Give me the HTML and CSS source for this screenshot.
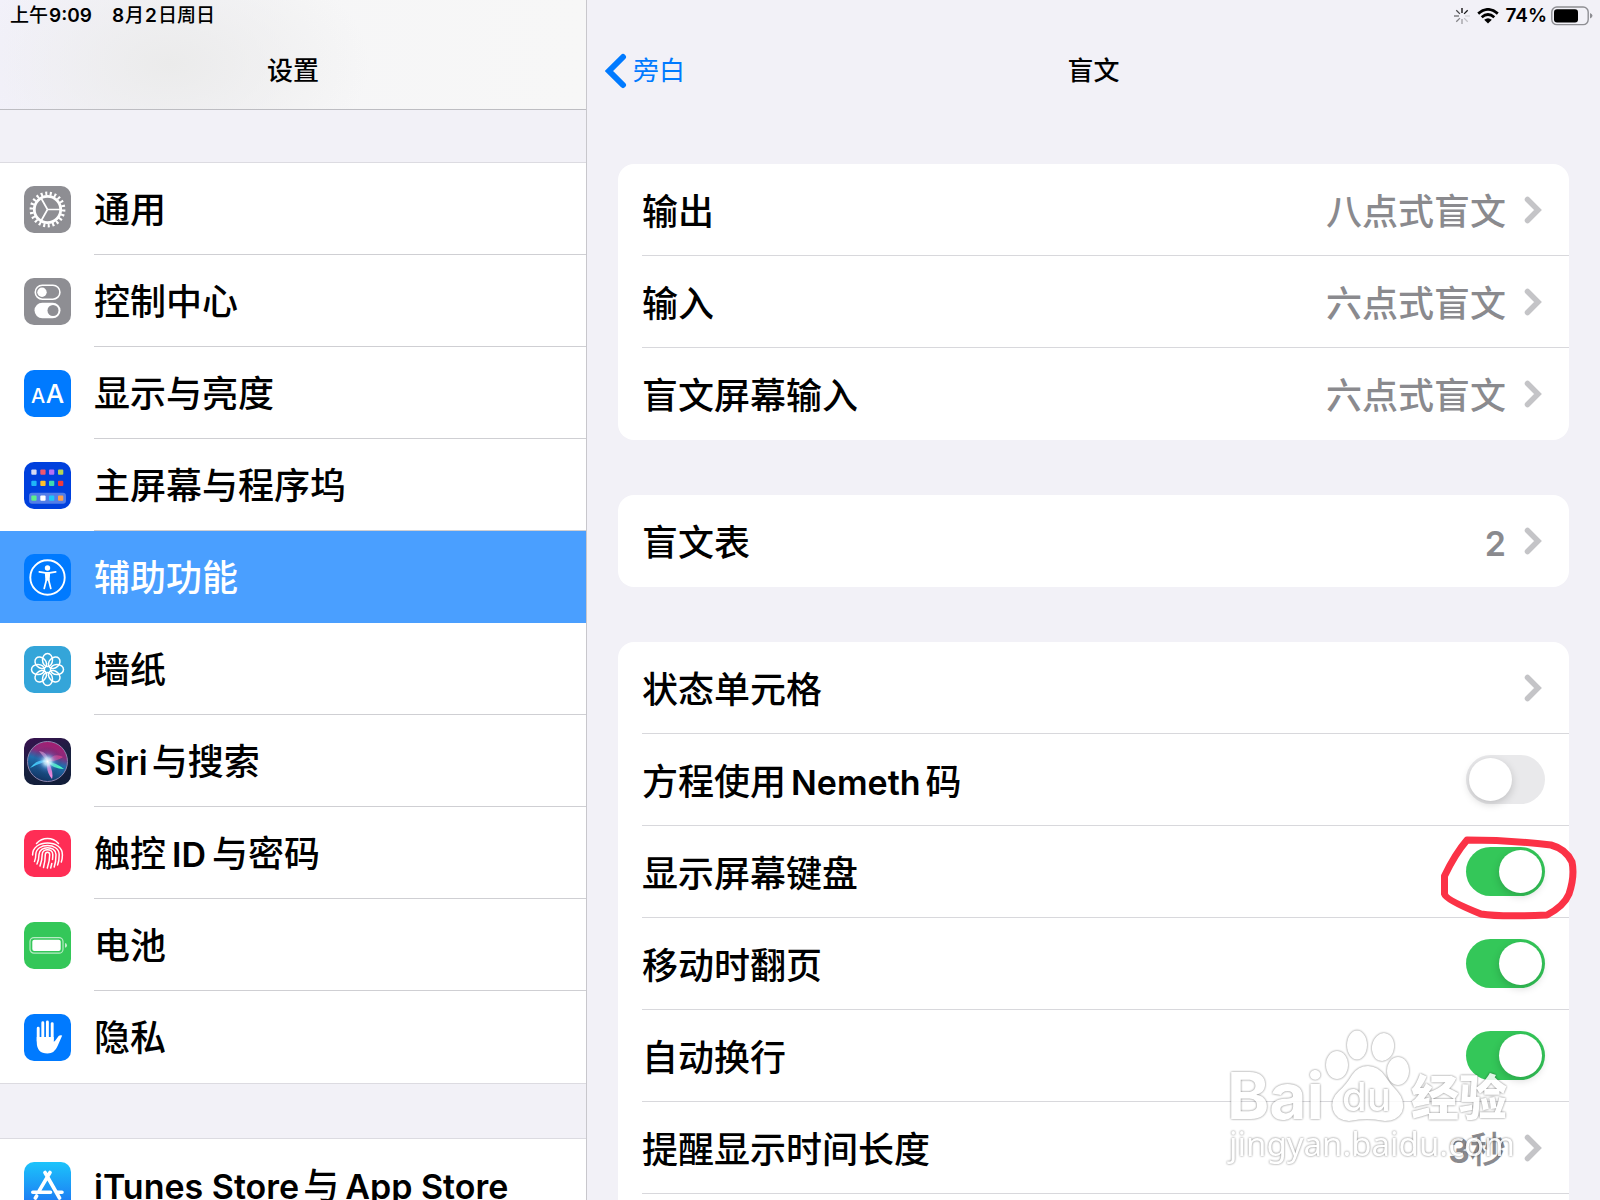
FILE: index.html
```html
<!DOCTYPE html>
<html lang="zh-CN">
<head>
<meta charset="utf-8">
<meta name="viewport" content="width=device-width, initial-scale=1">
<title>设置</title>
<link rel="stylesheet" href="styles.css">
</head>
<body>
<svg class="defs" aria-hidden="true">
  <defs>
    <symbol id="chevron" viewBox="0 0 18 28"><path d="M3.500 3.500L14 14L3.500 24.500" fill="none" stroke="currentColor" stroke-width="5.500" stroke-linecap="round" stroke-linejoin="miter"/></symbol>
  </defs>
</svg>
<div class="app">
  <aside class="sidebar">
    <header class="sidebar-head">
      <div class="status"><time>上午<span class="latin">9:09</span></time><time><span class="latin">8</span>月<span class="latin">2</span>日周日</time></div>
      <h1 class="title">设置</h1>
    </header>
    <nav class="menu">
      <ul class="menu-group">
        <li><a class="menu-item" href="#general">
          <svg class="icon gray" viewBox="0 0 47 47"><g fill="none" stroke="#fff"><circle cx="23.500" cy="23.500" r="13.200" stroke-width="2.800"/><circle cx="23.500" cy="23.500" r="16" stroke-width="3.800" pathLength="22" stroke-dasharray=".45 .55"/><path d="M23.500 23.500H37M23.500 23.500L17 12M23.500 23.500L17 35" stroke-width="1.700"/></g></svg>
          <span class="menu-label">通用</span></a></li>
        <li><a class="menu-item" href="#control">
          <svg class="icon gray" viewBox="0 0 47 47"><rect x="11.300" y="7.200" width="24.600" height="14" rx="7" fill="none" stroke="#fff" stroke-width="1.600"/><circle cx="18" cy="14.200" r="4.700" fill="#fff"/><rect x="10.500" y="24.700" width="26" height="15.600" rx="7.800" fill="#fff"/><circle cx="29" cy="32.500" r="5.500" fill="#8e8e93"/></svg>
          <span class="menu-label">控制中心</span></a></li>
        <li><a class="menu-item" href="#display">
          <svg class="icon blue" viewBox="0 0 47 47"><g fill="#fff" font-family="Inter, sans-serif" font-weight="500" text-anchor="middle"><text x="14" y="33.300" font-size="20">A</text><text x="31" y="33.300" font-size="26">A</text></g></svg>
          <span class="menu-label">显示与亮度</span></a></li>
        <li><a class="menu-item" href="#home">
          <svg class="icon navy" viewBox="0 0 47 47"><rect x="5" y="30.700" width="37" height="11" rx="3" fill="#fff" opacity=".32"/><rect x="7.300" y="7.400" width="5.300" height="5.300" rx="1" fill="#d5daf2"/><rect x="16.300" y="7.400" width="5.300" height="5.300" rx="1" fill="#f0566e"/><rect x="25" y="7.400" width="5.300" height="5.300" rx="1" fill="#b570f5"/><rect x="34" y="7.400" width="5.300" height="5.300" rx="1" fill="#b4d455"/><rect x="7.300" y="18.700" width="5.300" height="5.300" rx="1" fill="#1fb4f7"/><rect x="16.300" y="18.700" width="5.300" height="5.300" rx="1" fill="#ffbf2b"/><rect x="25" y="18.700" width="5.300" height="5.300" rx="1" fill="#3ddbb0"/><rect x="34" y="18.700" width="5.300" height="5.300" rx="1" fill="#f03a3a"/><rect x="7.300" y="33.400" width="5.300" height="5.300" rx="1" fill="#5df08a"/><rect x="16.300" y="33.400" width="5.300" height="5.300" rx="1" fill="#fff"/><rect x="25" y="33.400" width="5.300" height="5.300" rx="1" fill="#1cc8fa"/><rect x="34" y="33.400" width="5.300" height="5.300" rx="1" fill="#ff9f4a"/></svg>
          <span class="menu-label">主屏幕与程序坞</span></a></li>
        <li><a class="menu-item selected" href="#accessibility" aria-current="page">
          <svg class="icon blue" viewBox="0 0 47 47"><circle cx="23.500" cy="23.500" r="17.200" fill="none" stroke="#fff" stroke-width="1.900"/><circle cx="23.500" cy="14" r="2.700" fill="#fff"/><path d="M15.300 17.800L21.500 18.800H25.500L31.700 17.800M20.200 34.500L22.500 25.500H24.500L26.800 34.500" fill="none" stroke="#fff" stroke-width="1.700" stroke-linecap="round" stroke-linejoin="round"/><path d="M20.800 18.200H26.200L25.600 26.500H21.400Z" fill="#fff"/></svg>
          <span class="menu-label">辅助功能</span></a></li>
        <li><a class="menu-item" href="#wallpaper">
          <svg class="icon sky" viewBox="0 0 47 47"><g fill="none" stroke="#fff" stroke-width="1.500"><g id="petals"><ellipse cx="23.500" cy="14" rx="5" ry="6.500"/><ellipse cx="23.500" cy="33" rx="5" ry="6.500"/><ellipse cx="14" cy="23.500" rx="6.500" ry="5"/><ellipse cx="33" cy="23.500" rx="6.500" ry="5"/></g><use href="#petals" transform="rotate(45 23.500 23.500)"/></g></svg>
          <span class="menu-label">墙纸</span></a></li>
        <li><a class="menu-item" href="#siri">
          <svg class="icon siri" viewBox="0 0 47 47"><defs><radialGradient id="orb" cx=".5" cy=".5" r=".5"><stop offset="0" stop-color="#fff"/><stop offset=".25" stop-color="#c9ecff" stop-opacity=".8"/><stop offset=".55" stop-color="#5a8bd8" stop-opacity=".25"/><stop offset="1" stop-color="#0a1030" stop-opacity="0"/></radialGradient><linearGradient id="orbBase" x1=".65" y1="0" x2=".35" y2="1"><stop offset="0" stop-color="#a81c70"/><stop offset=".3" stop-color="#8a2b7c"/><stop offset=".5" stop-color="#1f6fae"/><stop offset="1" stop-color="#12305e"/></linearGradient></defs><circle cx="23.500" cy="23.500" r="20" fill="url(#orbBase)" stroke="#8f86b0" stroke-width="1"/><path d="M24 24Q31 24 40 31Q29 31 24 24Z" fill="#4fffc8"/><path d="M24 23Q16 25 6 30Q14 20 24 23Z" fill="#45d0ff"/><path d="M24 23Q30 34 28 41Q21 32 24 23Z" fill="#f08ae0"/><path d="M23 23Q18 17 15 13Q24 14 24 23Z" fill="#ffa8e0" opacity=".6"/><path d="M24 23Q30 14 39 19Q32 24 24 23Z" fill="#f04a96" opacity=".7"/><circle cx="23.500" cy="23.500" r="15" fill="url(#orb)"/></svg>
          <span class="menu-label"><span class="latin lead">Siri</span>与搜索</span></a></li>
        <li><a class="menu-item" href="#touch-id">
          <svg class="icon red" viewBox="0 0 47 47"><g fill="none" stroke="#fff" stroke-width="1.500" stroke-linecap="round"><path d="M12.500 13.500Q17 8.600 23.500 8.600T34.500 13.500"/><path d="M8.600 25C8 9 39 9 38.400 25Q38.400 29 37.300 32"/><path d="M10.500 31.500Q11.800 28.500 11.800 24.500C12 12.500 35 12.500 35.200 24.500Q35.200 31 33.600 35"/><path d="M13 34Q15 29.500 15 24.500C15.300 15.500 31.800 15.500 32 24.500Q32 32 30.200 37"/><path d="M16 36Q18.200 30 18.200 24.500C18.500 18 28.500 18 28.800 24.500Q28.800 27 28.500 29.500M27.800 33.500L26.700 38"/><path d="M19.500 37.500Q21.300 31 21.300 24.500C21.500 21.400 25.500 21.400 25.700 24.500Q25.700 31 23.300 38"/></g></svg>
          <span class="menu-label">触控<span class="latin">ID</span>与密码</span></a></li>
        <li><a class="menu-item" href="#battery">
          <svg class="icon green" viewBox="0 0 47 47"><rect x="6" y="15.600" width="33" height="15.600" rx="4" fill="none" stroke="#fff" stroke-opacity=".65" stroke-width="1.200"/><rect x="8.300" y="17.700" width="28.400" height="11.400" rx="2" fill="#fff"/><path d="M41 21Q43 21.500 43 23.400T41 25.800Z" fill="#fff" opacity=".7"/></svg>
          <span class="menu-label">电池</span></a></li>
        <li><a class="menu-item" href="#privacy">
          <svg class="icon blue" viewBox="0 0 47 47"><g stroke="#fff" stroke-width="2.900" stroke-linecap="round"><path d="M14.200 14.200V27M18.800 8.800V25M23.400 8V25M28.200 9.600V26"/></g><path d="M12.750 23H29.700V27.500Q30.800 27.500 31.700 26L34.600 22Q36 20.700 38.200 21.500L33.600 32Q30.500 39.500 23.500 39.500Q12.750 39.500 12.750 28Z" fill="#fff"/></svg>
          <span class="menu-label">隐私</span></a></li>
      </ul>
      <ul class="menu-group">
        <li><a class="menu-item" href="#store">
          <svg class="icon store" viewBox="0 0 47 47"><g fill="none" stroke="#fff" stroke-width="3.600" stroke-linecap="round"><path d="M21 10.500L35.500 36M26 10.500L15.300 28.700M8.800 30.200H26.500M33.500 30.200H38M12.600 34L11.400 36"/></g></svg>
          <span class="menu-label"><span class="latin lead">iTunes Store</span>与<span class="latin">App Store</span></span></a></li>
      </ul>
    </nav>
  </aside>
  <main class="detail">
    <header class="detail-head">
      <div class="status status-right">
        <svg width="16" height="16" viewBox="0 0 16 16"><g stroke="#000" stroke-width="1.300"><path d="M8 0V5"/><path d="M13.700 2.300L10.100 5.900" opacity=".9"/><path d="M16 8H11" opacity=".12"/><path d="M13.700 13.700L10.100 10.100" opacity=".2"/><path d="M8 16V11" opacity=".35"/><path d="M2.300 13.700L5.900 10.100" opacity=".45"/><path d="M0 8H5" opacity=".55"/><path d="M2.300 2.300L5.900 5.900" opacity=".7"/></g></svg>
        <svg class="wifi" width="22" height="16" viewBox="0 0 22 16"><g fill="none" stroke="#000" stroke-width="2.800"><path d="M1.200 5.600Q11 -2.800 20.800 5.600"/><path d="M4.700 9.200Q11 3.800 17.300 9.200"/></g><path d="M7.200 11.700Q11 8.700 14.800 11.700L11 15.600Z"/></svg>
        <span class="latin">74%</span>
        <svg width="42" height="20" viewBox="0 0 42 20"><rect x=".8" y="1" width="36.400" height="17.600" rx="5" fill="none" stroke="#8e8e93" stroke-width="1.400"/><rect x="3" y="3.200" width="24" height="13.200" rx="3" fill="#000"/><path d="M39 7Q41.500 8 41.500 9.800T39 12.600Z" fill="#8e8e93"/></svg>
      </div>
      <div class="bar">
        <a class="back" href="#voiceover"><svg width="22" height="36" viewBox="0 0 22 36"><path d="M18 4L4 18L18 32" fill="none" stroke="currentColor" stroke-width="6" stroke-linecap="round"/></svg>旁白</a>
        <h2 class="title">盲文</h2>
      </div>
    </header>
    <div class="cards">
      <section class="card">
        <a class="row" href="#output"><span class="label">输出</span><span class="value">八点式盲文</span><svg class="chevron"><use href="#chevron"/></svg></a>
        <a class="row" href="#input"><span class="label">输入</span><span class="value">六点式盲文</span><svg class="chevron"><use href="#chevron"/></svg></a>
        <a class="row" href="#screen-input"><span class="label">盲文屏幕输入</span><span class="value">六点式盲文</span><svg class="chevron"><use href="#chevron"/></svg></a>
      </section>
      <section class="card">
        <a class="row" href="#tables"><span class="label">盲文表</span><span class="value"><span class="latin">2</span></span><svg class="chevron"><use href="#chevron"/></svg></a>
      </section>
      <section class="card card-long">
        <a class="row" href="#status-cells"><span class="label">状态单元格</span><svg class="chevron"><use href="#chevron"/></svg></a>
        <div class="row"><label class="label" for="nemeth">方程使用<span class="latin">Nemeth</span>码</label><input class="switch" type="checkbox" role="switch" id="nemeth"></div>
        <div class="row"><label class="label" for="keyboard">显示屏幕键盘</label><input class="switch" type="checkbox" role="switch" id="keyboard" checked>
          <svg class="marker" viewBox="0 0 140 88" aria-hidden="true"><path d="M28 6Q16 20 5.500 42V60Q7 66 42 80Q60 83 108 81Q125 72 130 60Q136 42 133 28Q127 15 112 11Q70 6 28 6Z" fill="none" stroke="#fb3246" stroke-width="7" stroke-linejoin="round"/></svg></div>
        <div class="row"><label class="label" for="pan">移动时翻页</label><input class="switch" type="checkbox" role="switch" id="pan" checked></div>
        <div class="row"><label class="label" for="wrap">自动换行</label><input class="switch" type="checkbox" role="switch" id="wrap" checked></div>
        <a class="row" href="#duration"><span class="label">提醒显示时间长度</span><span class="value"><span class="latin">3</span>秒</span><svg class="chevron"><use href="#chevron"/></svg></a>
      </section>
    </div>
  </main>
  <svg class="watermark" viewBox="0 0 290 140" aria-label="Baidu 经验">
    <g class="glow"><text class="wm-logo" x="0" y="91">Bai</text></g>
    <g class="glow"><ellipse cx="110" cy="37" rx="11" ry="14"/><ellipse cx="130" cy="17" rx="10" ry="14.500"/><ellipse cx="156" cy="19" rx="11" ry="14" transform="rotate(10 156 19)"/><ellipse cx="171" cy="43" rx="11" ry="14"/><path d="M141 38Q151 38 158 48Q163 56 170 63Q179 73 175 84Q170 93 158 93Q147 91 140 91Q133 91 122 93Q109 92 106 82Q103 71 112 63Q119 57 125 47Q131 38 141 38Z"/></g>
    <g class="glow"><text class="wm-du" x="115" y="83">du</text></g>
    <g class="glow"><text class="wm-cn" x="184" y="87">经验</text></g>
    <g class="glow"><text class="wm-url" x="2" y="128">jingyan.baidu.com</text></g>
  </svg>
</div>
</body>
</html>
```

FILE: styles.css
```css
* { box-sizing: border-box; }

body {
  margin: 0;
  background: #f2f1f7;
  color: #000;
  font-family: Inter, "Noto Sans CJK SC", sans-serif;
  font-size: 36px;
  font-weight: 500;
}

a { color: inherit; text-decoration: none; }
ul { list-style: none; margin: 0; padding: 0; }
.defs { position: absolute; width: 0; height: 0; }

.app {
  position: relative;
  display: grid;
  grid-template-columns: 587px 1fr;
  height: 100vh;
  overflow: hidden;
}

.latin { font-size: 34px; font-weight: 600; }

.status {
  display: flex;
  align-items: center;
  gap: 18px;
  height: 32px;
  padding: 0 10px;
  font-size: 19px;
  line-height: 32px;
}
.status .latin { font-size: 19px; }
.status time .latin { margin: 0 1px; }
.status-right { justify-content: flex-end; gap: 4px; padding: 0 7px; }
.status-right .wifi { margin: 0 2px 0 3px; }

.title {
  margin: 0;
  font-size: 26px;
  line-height: 40px;
  font-weight: 500;
  text-align: center;
}

/* Sidebar */
.sidebar {
  border-right: 1px solid #c8c7cc;
  overflow-y: auto;
  scrollbar-width: none;
}
.sidebar-head {
  height: 110px;
  border-bottom: 1px solid #bdbdc2;
  background: radial-gradient(ellipse 200px 120px at 170px 64px, #ebebeb, rgba(235, 235, 235, 0)), linear-gradient(90deg, #f2f1fa, #f6f6f7 50%, #f7f7f7);
}
.sidebar-head .title { margin-top: 19px; }
.menu { display: flex; flex-direction: column; gap: 54px; padding-top: 52px; }
.menu-group { background: #fff; border-top: 1px solid #dcdbe1; border-bottom: 1px solid #dcdbe1; }
.menu-item {
  display: flex;
  align-items: center;
  gap: 23px;
  height: 92px;
  padding-left: 24px;
}
.menu-label {
  flex: 1;
  height: 92px;
  line-height: 94px;
  border-bottom: 1px solid #cfcfd3;
  white-space: nowrap;
}
.menu-group li:last-child .menu-label { border-bottom: 0; }
.menu-label .latin { margin: 0 6px; }
.menu-label .lead { margin: 0 4px 0 0; }
.menu-item.selected { background: #4a9fff; color: #fff; }
.menu-item.selected .menu-label { border-color: transparent; }

.icon { width: 47px; height: 47px; border-radius: 10px; }
.gray { background: #8e8e93; }
.blue { background: #007aff; }
.navy { background: #0040dd; }
.sky { background: #34a5d9; }
.siri { background: linear-gradient(160deg, #3a1050, #17213f 50%, #101c38); }
.red { background: #ff2d55; }
.green { background: #34c759; }
.store { background: linear-gradient(#1cc4fb, #1d70f2); }

/* Detail pane */
.detail { overflow-y: auto; scrollbar-width: none; }
.detail-head { height: 164px; }
.bar {
  display: grid;
  grid-template-columns: 1fr auto 1fr;
  align-items: center;
  padding: 19px 18px 0;
}
.back {
  display: flex;
  align-items: center;
  gap: 6px;
  height: 40px;
  color: #007aff;
  font-size: 26px;
  line-height: 36px;
  font-weight: 400;
}
.cards { display: flex; flex-direction: column; gap: 55px; padding: 0 31px 40px; }
.card { background: #fff; border-radius: 16px; padding-left: 24px; }
.card-long { padding-bottom: 40px; }
.row {
  position: relative;
  display: flex;
  align-items: center;
  height: 92px;
  padding-right: 24px;
  line-height: 96px;
  border-bottom: 1px solid #d8d8dc;
}
.card:not(.card-long) .row:last-child { border-bottom: 0; }
.label, .value { align-self: flex-start; }
.label { flex: 1; }
.label .latin { margin: 0 5px; }
.value { color: #8a8a8e; }
.value .latin { margin-right: 8px; }
.value .latin:last-child { margin-right: 0; }
.chevron { width: 18px; height: 28px; margin-left: 18px; margin-right: 3px; color: #c4c4c7; }

.switch {
  appearance: none;
  width: 79px;
  height: 49px;
  margin: 0;
  padding: 3px;
  border-radius: 25px;
  background: #e9e9eb;
}
.switch::before {
  content: "";
  display: block;
  width: 43px;
  height: 43px;
  border-radius: 50%;
  background: #fff;
  box-shadow: 0 3px 8px rgba(0, 0, 0, .18);
}
.switch:checked { background: #34c759; }
.switch:checked::before { margin-left: 30px; }

/* Hand-drawn ring round the keyboard switch */
.marker { position: absolute; top: 8px; right: -10px; width: 140px; height: 88px; pointer-events: none; }

.watermark {
  position: absolute;
  right: 83px;
  bottom: 32px;
  width: 290px;
  height: 140px;
  opacity: .85;
  fill: #fff;
  overflow: visible;
  pointer-events: none;
}
.glow { filter: drop-shadow(0 0 1px rgba(0, 0, 0, .6)); }
.wm-logo { font: 700 64px Inter, sans-serif; }
.wm-du { font: 500 40px Inter, sans-serif; }
.wm-cn { font: 900 48px "Noto Sans CJK SC", sans-serif; }
.wm-url { font: 400 33px "Noto Sans", sans-serif; }
```
